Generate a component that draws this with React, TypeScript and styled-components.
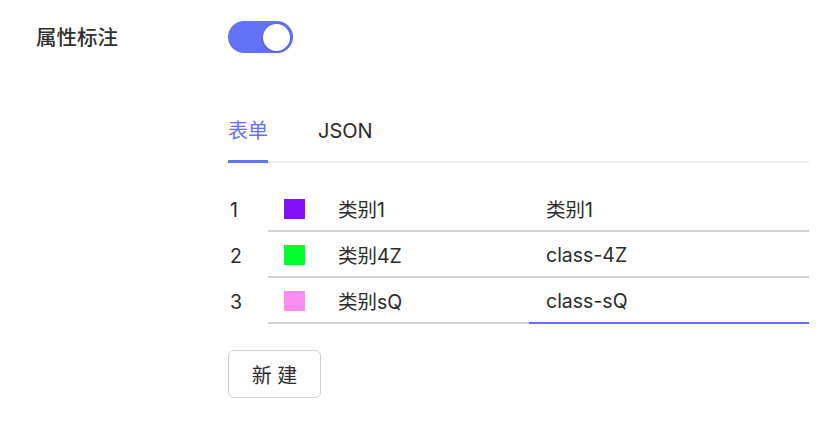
import React from "react";
import styled, { createGlobalStyle } from "styled-components";

const Global = createGlobalStyle`
  html, body { margin: 0; padding: 0; background: #fff; }
  body {
    font-family: "Inter", "Noto Sans CJK SC", sans-serif;
    color: #2b2b2b;
    -webkit-font-smoothing: antialiased;
  }
`;

const BLUE = "#6271f5";

const Page = styled.div`
  padding: 21px 23px 0 36px;
  width: 832px;
  box-sizing: border-box;
`;

const FormItem = styled.div<{ $mt?: number }>`
  display: grid;
  grid-template-columns: 192px 1fr;
  margin-top: ${(p) => p.$mt ?? 0}px;
`;

const Label = styled.div`
  font-size: 20.5px;
  font-weight: 500;
  line-height: 32px;
  color: #2f2f2f;
  margin-top: 1px;
`;

const Switch = styled.div<{ $on: boolean }>`
  width: 65px;
  height: 32px;
  border-radius: 16px;
  background: ${(p) => (p.$on ? BLUE : "#ccc")};
  display: flex;
  align-items: center;
  justify-content: ${(p) => (p.$on ? "flex-end" : "flex-start")};
  padding: 0 3px;
  box-sizing: border-box;
`;

const Knob = styled.div`
  width: 27px;
  height: 27px;
  border-radius: 50%;
  background: #fff;
  box-shadow: 0 1px 3px rgba(0, 0, 0, 0.25);
`;

const Control = styled.div`
  display: flex;
  flex-direction: column;
`;

const TabList = styled.div`
  display: flex;
  gap: 50px;
  border-bottom: 2px solid #ededed;
`;

const Tab = styled.div<{ $active?: boolean }>`
  font-size: 20px;
  line-height: 26px;
  padding-bottom: 16px;
  margin-bottom: -2px;
  color: ${(p) => (p.$active ? BLUE : "#2b2b2b")};
  border-bottom: 3px solid ${(p) => (p.$active ? BLUE : "transparent")};
`;

const Rows = styled.div`
  display: flex;
  flex-direction: column;
  margin-top: 23px;
`;

const Row = styled.div`
  display: grid;
  grid-template-columns: 40px 261px 280px;
  height: 46px;
  font-size: 19.5px;
`;

const Index = styled.div`
  display: flex;
  align-items: center;
  padding-left: 2px;
  padding-top: 1px;
`;

const Field = styled.div<{ $focus?: boolean; $pad: number }>`
  display: flex;
  align-items: center;
  padding-left: ${(p) => p.$pad}px;
  padding-top: 1px;
  border-bottom: 2px solid ${(p) => (p.$focus ? BLUE : "#d2d2d2")};
  box-sizing: border-box;
`;

const Swatch = styled.div<{ $color: string }>`
  width: 21px;
  height: 20px;
  background: ${(p) => p.$color};
  margin-right: 33px;
`;

const Button = styled.button`
  margin-top: 26px;
  width: 93px;
  height: 48px;
  border: 1px solid #d0d0d0;
  border-radius: 6px;
  background: #fff;
  font-family: inherit;
  font-size: 20px;
  color: #2b2b2b;
  padding: 0;
  cursor: pointer;
`;

const rows = [
  { n: 1, color: "#8410f7", name: "类别1", value: "类别1" },
  { n: 2, color: "#00ff2f", name: "类别4Z", value: "class-4Z" },
  { n: 3, color: "#ff8cf2", name: "类别sQ", value: "class-sQ", focus: true },
];

export default function App() {
  return (
    <>
      <Global />
      <Page>
        <FormItem>
          <Label>属性标注</Label>
          <Switch $on>
            <Knob />
          </Switch>
        </FormItem>
        <FormItem $mt={64}>
          <div />
          <Control>
            <TabList>
              <Tab $active>表单</Tab>
              <Tab>JSON</Tab>
            </TabList>
            <Rows>
              {rows.map((r) => (
                <Row key={r.n}>
                  <Index>{r.n}</Index>
                  <Field $pad={16}>
                    <Swatch $color={r.color} />
                    {r.name}
                  </Field>
                  <Field $pad={17} $focus={r.focus}>
                    {r.value}
                  </Field>
                </Row>
              ))}
            </Rows>
            <div>
              <Button>新 建</Button>
            </div>
          </Control>
        </FormItem>
      </Page>
    </>
  );
}
